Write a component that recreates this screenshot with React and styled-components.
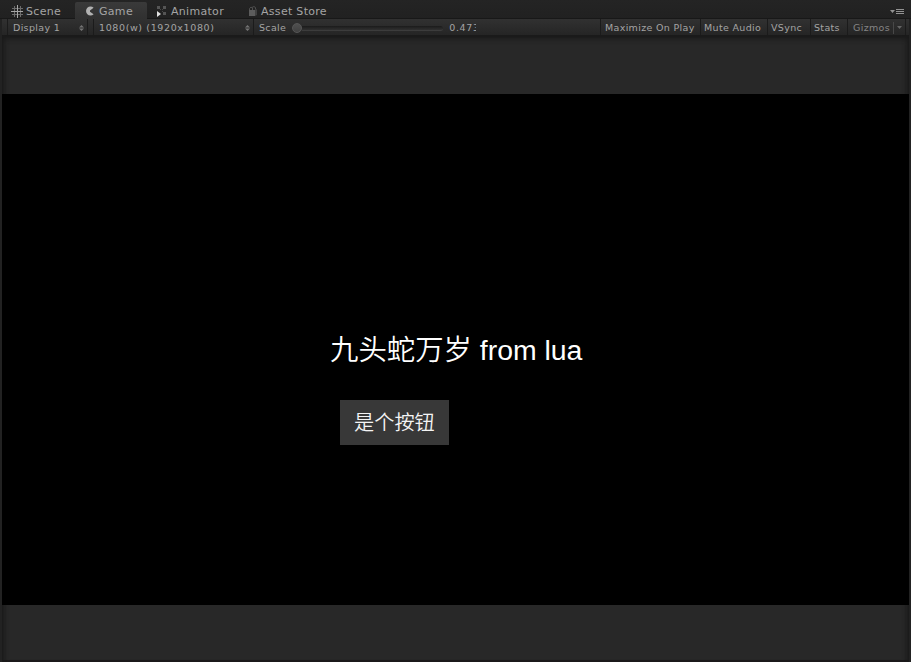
import React from 'react';
import styled, { createGlobalStyle } from 'styled-components';

const Global = createGlobalStyle`
  * { box-sizing: border-box; }
  body { margin: 0; background: #222; overflow: hidden; }
`;

const Window = styled.div`
  width: 911px;
  height: 662px;
  display: flex;
  flex-direction: column;
  background: #222222;
  font-family: "DejaVu Sans", sans-serif;
  color: #a4a4a4;
  white-space: nowrap;
`;

const TabBar = styled.div`
  height: 19px;
  flex: none;
  display: flex;
  padding: 2px 7px 0 2px;
  background: linear-gradient(#242424, #212121);
  border-bottom: 1px solid #181818;
`;

const Tab = styled.div`
  width: ${(p) => p.$width}px;
  height: 17px;
  display: flex;
  align-items: center;
  padding: 1px 0 0 ${(p) => p.$pad}px;
  gap: ${(p) => p.$gap}px;
  font-size: 11px;
  line-height: 16px;
  letter-spacing: 0.3px;
  background: ${(p) => (p.$active ? 'linear-gradient(#3a3a3a, #303030)' : 'transparent')};
  border-radius: 2px 2px 0 0;
  svg { flex: none; }
`;

const TabLabel = styled.span`
  padding-top: 1px;
`;

const PaneMenu = styled.div`
  margin-left: auto;
  padding-top: 6px;
  height: 15px;
  svg { display: block; }
`;

const Toolbar = styled.div`
  height: 16px;
  flex: none;
  margin: 0 2px;
  display: flex;
  background: linear-gradient(#313131, #252525);
  font-size: 9.5px;
  line-height: 18px;
  letter-spacing: 0.33px;
`;

const Cell = styled.div`
  width: ${(p) => p.$width}px;
  flex: none;
  display: flex;
  align-items: center;
  padding: 1px ${(p) => p.$right || 0}px 0 ${(p) => p.$pad || 0}px;
  justify-content: ${(p) => (p.$spread ? 'space-between' : 'flex-start')};
  border-left: ${(p) => (p.$plain ? '0' : '1px')} solid #1b1b1b;
  color: ${(p) => p.$color || 'inherit'};
  letter-spacing: ${(p) => (p.$wide ? '0.62px' : 'inherit')};
  svg { flex: none; }
`;

const Slider = styled.div`
  width: 151px;
  height: 15px;
  margin: 0 6px;
  flex: none;
  display: flex;
  align-items: center;
`;

const Knob = styled.div`
  width: 10px;
  height: 10px;
  border-radius: 50%;
  border: 1px solid #565656;
  background: linear-gradient(#505050, #414141);
`;

const Track = styled.div`
  flex: 1;
  height: 5px;
  margin-top: 1px;
  border-radius: 0 3px 3px 0;
  border-bottom: 1px solid #3c3c3c;
  background: linear-gradient(#1b1b1b, #303030);
`;

const Ratio = styled.span`
  width: 27px;
  overflow: hidden;
  letter-spacing: 0.65px;
`;

const GizmoArrow = styled.div`
  height: 12px;
  display: flex;
  align-items: center;
  padding-left: 3px;
  border-left: 1px solid #484848;
`;

const GameView = styled.div`
  flex: 1;
  display: flex;
  flex-direction: column;
  margin: 0 2px;
  background: #282828;
  box-shadow: inset 0 5px 5px -1px #1a1a1a, inset 5px 0 5px -3px #1a1a1a,
    inset -5px 0 5px -3px #1a1a1a, inset 0 -2px 0 #1d1b1c;
`;

const Screen = styled.div`
  height: 511px;
  margin-top: 59px;
  padding: 239px 0 0 328px;
  background: #000;
  color: #fff;
`;

const Title = styled.div`
  height: 34px;
  font: 350 28.4px/34px "Liberation Sans", "Noto Sans CJK SC", sans-serif;
`;

const GameButton = styled.button`
  display: block;
  width: 109px;
  height: 45px;
  margin: 33px 0 0 10px;
  padding: 2px 0 0 14px;
  border: 0;
  text-align: left;
  background: #383838;
  color: #f4f4f4;
  font: 350 20.2px/43px "Liberation Sans", "Noto Sans CJK SC", sans-serif;
`;

const GridIcon = () => (
  <svg width="12" height="13" viewBox="0 0 12 13" shapeRendering="crispEdges">
    <path d="M3.5 1v11M9.5 1v11M1 3.5h11M1 9.5h11" stroke="#6c6c6c" />
    <path d="M6.5 0v13M0 6.5h12" stroke="#a6a6a6" />
  </svg>
);

const PacIcon = () => (
  <svg width="10" height="10" viewBox="0 0 10 10">
    <path d="M8.6 1.8A4.4 4.6 0 1 0 8.6 8.2L5 5.8V4.4Z" fill="#b2b2b2" />
  </svg>
);

const AnimatorIcon = () => (
  <svg width="10" height="11" viewBox="0 0 10 11" shapeRendering="crispEdges">
    <path d="M0 0h3v3H0zM6 0h3v3H6zM6 6h3v3H6z" fill="#555" />
    <path d="M3 3h1v1H3zM5 3h1v1H5zM5 5h1v1H5z" fill="#484848" />
    <path d="M0 5v6l4-3z" fill="#e0e0e0" shapeRendering="auto" />
  </svg>
);

const StoreIcon = () => (
  <svg width="10" height="11" viewBox="0 0 10 11">
    <path d="M1 4h6v6H1z" fill="#5c5c5c" />
    <path d="M7 4l2-1v6L7 10z" fill="#404040" />
    <path d="M1.5 4V2.5Q3 0 4.5 2V4M4 1.5Q6-.5 7.5 1.5V3.5" fill="none" stroke="#505050" />
  </svg>
);

const Updown = () => (
  <svg width="5" height="6" viewBox="0 0 5 6" fill="#747474">
    <path d="M0 2.5L2.5 0L5 2.5ZM0 3.5H5L2.5 6Z" />
  </svg>
);

export default function App() {
  return (
    <>
      <Global />
      <Window>
        <TabBar>
          <Tab $width={73} $pad={9} $gap={3}><GridIcon /><TabLabel>Scene</TabLabel></Tab>
          <Tab $width={72} $pad={10} $gap={4} $active><PacIcon /><TabLabel>Game</TabLabel></Tab>
          <Tab $width={93} $pad={10} $gap={4}><AnimatorIcon /><TabLabel>Animator</TabLabel></Tab>
          <Tab $width={95} $pad={8} $gap={3}><StoreIcon /><TabLabel>Asset Store</TabLabel></Tab>
          <PaneMenu>
            <svg width="14" height="7" viewBox="0 0 14 7" fill="#929292">
              <path d="M0 2h5L2.5 5zM6 1h8v1H6zM6 3h8v1H6zM6 5h8v1H6z" />
            </svg>
          </PaneMenu>
        </TabBar>
        <Toolbar>
          <Cell $width={5} $plain />
          <Cell $width={80} $pad={5} $right={3} $spread>Display 1<Updown /></Cell>
          <Cell $width={6} />
          <Cell $width={160} $pad={5} $right={3} $spread $wide>1080(w) (1920x1080)<Updown /></Cell>
          <Cell $width={347} $pad={5}>
            Scale
            <Slider><Knob /><Track /></Slider>
            <Ratio>0.473</Ratio>
          </Cell>
          <Cell $width={100} $pad={4}>Maximize On Play</Cell>
          <Cell $width={67} $pad={3}>Mute Audio</Cell>
          <Cell $width={43} $pad={3}>VSync</Cell>
          <Cell $width={37} $pad={3}>Stats</Cell>
          <Cell $width={58} $pad={5} $right={3} $spread $color="#858585">
            Gizmos
            <GizmoArrow>
              <svg width="5" height="3" viewBox="0 0 5 3"><path d="M0 0h5L2.5 3z" fill="#666" /></svg>
            </GizmoArrow>
          </Cell>
          <Cell $width={4} />
        </Toolbar>
        <GameView>
          <Screen>
            <Title>九头蛇万岁 from lua</Title>
            <GameButton>是个按钮</GameButton>
          </Screen>
        </GameView>
      </Window>
    </>
  );
}
